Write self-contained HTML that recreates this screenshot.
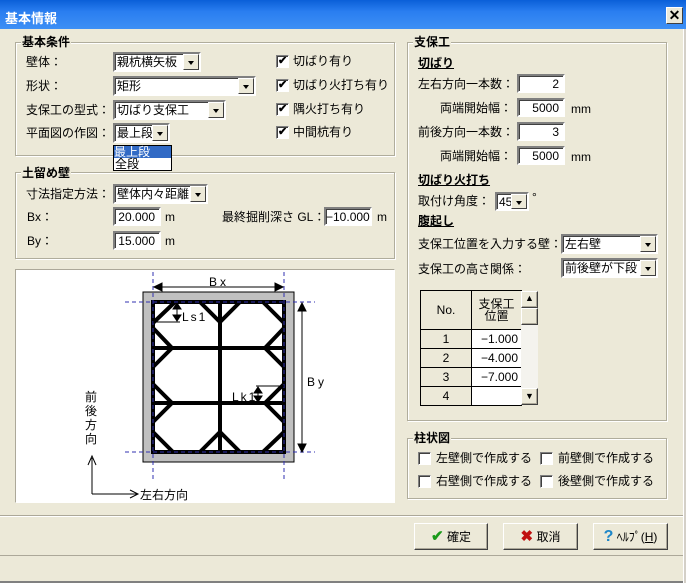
<!DOCTYPE html>
<html><head><meta charset="utf-8"><style>
*{box-sizing:border-box;margin:0;padding:0}
body{width:686px;height:583px;overflow:hidden;background:#ece9d8;font-family:"Liberation Sans","Noto Sans CJK JP",sans-serif;font-size:12px;color:#000;position:relative}
.a{position:absolute;white-space:nowrap;line-height:14px}
.title{position:absolute;left:0;top:0;width:686px;height:29px;background:linear-gradient(#0a5fd8,#2a7ef0 40%,#3d8ff5);color:#fff;font-weight:bold;font-size:13px;padding:8px 0 0 5px}
.close{position:absolute;left:666px;top:7px;width:17px;height:17px;background:#ece9d8;border:1px solid #fff;border-right-color:#404040;border-bottom-color:#404040;font-weight:bold;font-size:14px;line-height:14px;text-align:center;color:#000}
.grp{position:absolute;border:1px solid #b0ad9c;box-shadow:1px 1px 0 #fff inset,1px 1px 0 #fff}
.gt{position:absolute;background:#ece9d8;font-weight:bold;padding:0 1px;line-height:14px}
.in{position:absolute;background:#fff;border:2px solid;border-color:#808080 #fff #fff #808080;box-shadow:inset 1px 1px 0 #404040;text-align:right;padding-right:4px;line-height:16px}
.cb{position:absolute;background:#fff;border:2px solid;border-color:#808080 #fff #fff #808080;box-shadow:inset 1px 1px 0 #404040;padding-left:2px;line-height:16px;overflow:hidden}
.cb i{position:absolute;right:0;top:0;width:16px;bottom:0;background:#ece9d8;border:1px solid;border-color:#fff #404040 #404040 #fff}
.cb i:after{content:"";position:absolute;left:4px;top:6px;border:3px solid transparent;border-top:4px solid #000;border-bottom:0}
.ck{position:absolute;width:13px;height:13px;background:#fff;border:1px solid #808080;border-right-color:#fff;border-bottom-color:#fff;box-shadow:inset 1px 1px 0 #404040}
.ck.on:after{content:"✔";position:absolute;left:1px;top:-2px;font-size:11px;font-weight:bold}
.u{font-weight:bold;text-decoration:underline}
.btn{position:absolute;height:27px;background:#ece9d8;border:1px solid;border-color:#fff #404040 #404040 #fff;box-shadow:inset -1px -1px 0 #aca899;text-align:center;line-height:25px}
table{border-collapse:collapse;position:absolute}
td{border:1px solid #000;height:19px;font-size:12px}
</style></head><body>
<div class="title">基本情報</div><div class="close">✕</div>
<div style="position:absolute;left:683px;top:29px;width:3px;height:554px;background:#d4d0c8;border-left:1px solid #fff"></div>

<div class="grp" style="left:15px;top:42px;width:380px;height:114px"></div>
<div class="gt" style="left:21px;top:35px">基本条件</div>
<div class="a" style="left:26px;top:55px">壁体：</div>
<div class="a" style="left:26px;top:79px">形状：</div>
<div class="a" style="left:26px;top:103px">支保工の型式：</div>
<div class="a" style="left:26px;top:126px">平面図の作図：</div>
<div class="cb" style="left:113px;top:52px;width:88px;height:20px">親杭横矢板<i></i></div>
<div class="cb" style="left:113px;top:76px;width:143px;height:20px">矩形<i></i></div>
<div class="cb" style="left:113px;top:100px;width:113px;height:20px">切ばり支保工<i></i></div>
<div class="cb" style="left:113px;top:123px;width:57px;height:20px">最上段<i></i></div>
<div style="position:absolute;left:113px;top:145px;width:59px;height:26px;background:#fff;border:1px solid #000"></div>
<div class="a" style="left:114px;top:146px;width:57px;background:#316ac5;color:#fff;height:12px;line-height:12px">最上段</div>
<div class="a" style="left:115px;top:158px;line-height:12px">全段</div>
<div class="ck on" style="left:276px;top:55px"></div><div class="a" style="left:293px;top:54px">切ばり有り</div>
<div class="ck on" style="left:276px;top:79px"></div><div class="a" style="left:293px;top:78px">切ばり火打ち有り</div>
<div class="ck on" style="left:276px;top:103px"></div><div class="a" style="left:293px;top:102px">隅火打ち有り</div>
<div class="ck on" style="left:276px;top:126px"></div><div class="a" style="left:293px;top:125px">中間杭有り</div>

<div class="grp" style="left:15px;top:172px;width:380px;height:87px"></div>
<div class="gt" style="left:21px;top:166px">土留め壁</div>
<div class="a" style="left:26px;top:187px">寸法指定方法：</div>
<div class="cb" style="left:113px;top:184px;width:95px;height:20px">壁体内々距離<i></i></div>
<div class="a" style="left:27px;top:210px">Bx：</div>
<div class="in" style="left:113px;top:207px;width:48px;height:19px">20.000</div><div class="a" style="left:165px;top:210px">m</div>
<div class="a" style="left:27px;top:234px">By：</div>
<div class="in" style="left:113px;top:231px;width:48px;height:19px">15.000</div><div class="a" style="left:165px;top:234px">m</div>
<div class="a" style="left:222px;top:210px">最終掘削深さ GL：</div>
<div class="in" style="left:324px;top:207px;width:48px;height:19px">−10.000</div><div class="a" style="left:377px;top:210px">m</div>

<div style="position:absolute;left:15px;top:269px;width:380px;height:234px;background:#fff;border:1px solid #aca899;border-right-color:#fff;border-bottom-color:#fff"></div>
<svg style="position:absolute;left:0;top:0" width="686" height="583">
<rect x="143" y="292" width="151" height="170" fill="#c0c0c0" stroke="#000" stroke-width="1"/>
<rect x="153" y="302" width="131" height="150" fill="#fff" stroke="#000" stroke-width="4"/>
<g stroke="#000" stroke-width="4" fill="none">
<line x1="220" y1="302" x2="220" y2="452"/><line x1="153" y1="348" x2="284" y2="348"/><line x1="153" y1="403" x2="284" y2="403"/>
<polyline points="153,323 175,302"/><polyline points="200,302 220,322 240,302"/><polyline points="263,302 284,323"/>
<polyline points="153,328 172,348 153,367"/><polyline points="284,328 265,348 284,367"/>
<polyline points="153,384 172,403 153,422"/><polyline points="284,384 265,403 284,422"/>
<polyline points="153,432 173,452"/><polyline points="200,452 220,432 240,452"/><polyline points="263,452 284,432"/>
</g>
<g stroke="#3030b0" stroke-width="1" stroke-dasharray="4,3">
<line x1="153" y1="272" x2="153" y2="480"/><line x1="284" y1="272" x2="284" y2="480"/>
<line x1="125" y1="302" x2="315" y2="302"/><line x1="125" y1="452" x2="315" y2="452"/>
</g>
<g stroke="#000" stroke-width="1" fill="#000">
<line x1="157" y1="287" x2="280" y2="287"/><polygon points="154,287 162,283 162,291"/><polygon points="283,287 275,283 275,291"/>
<line x1="302" y1="306" x2="302" y2="449"/><polygon points="302,303 298,311 306,311"/><polygon points="302,452 298,444 306,444"/>
<line x1="153" y1="322" x2="180" y2="322"/><line x1="177" y1="305" x2="177" y2="320"/><polygon points="177,303 173,309 181,309"/><polygon points="177,321 173,315 181,315"/>
<line x1="256" y1="386" x2="284" y2="386"/><line x1="258" y1="388" x2="258" y2="401"/><polygon points="258,387 254,393 262,393"/><polygon points="258,402 254,396 262,396"/>
<line x1="92" y1="458" x2="92" y2="494" fill="none"/><line x1="92" y1="494" x2="137" y2="494"/>
</g>
<polyline points="88,465 92,456 96,465" stroke="#000" fill="none"/>
<polyline points="130,490 138,494 130,498" stroke="#000" fill="none"/>
</svg>
<div class="a" style="left:209px;top:275px;letter-spacing:3px">Bx</div>
<div class="a" style="left:307px;top:375px;letter-spacing:3px">By</div>
<div class="a" style="left:182px;top:310px;letter-spacing:2px">Ls1</div>
<div class="a" style="left:232px;top:390px;letter-spacing:2px">Lk1</div>
<div class="a" style="left:85px;top:390px;width:14px;white-space:normal;line-height:14px">前後方向</div>
<div class="a" style="left:140px;top:488px">左右方向</div>

<div class="grp" style="left:407px;top:42px;width:260px;height:379px"></div>
<div class="gt" style="left:413px;top:35px">支保工</div>
<div class="a u" style="left:418px;top:56px">切ばり</div>
<div class="a" style="left:418px;top:77px">左右方向一本数：</div>
<div class="in" style="left:517px;top:74px;width:48px;height:19px">2</div>
<div class="a" style="left:440px;top:101px">両端開始幅：</div>
<div class="in" style="left:517px;top:98px;width:48px;height:19px">5000</div><div class="a" style="left:571px;top:102px">mm</div>
<div class="a" style="left:418px;top:125px">前後方向一本数：</div>
<div class="in" style="left:517px;top:122px;width:48px;height:19px">3</div>
<div class="a" style="left:440px;top:149px">両端開始幅：</div>
<div class="in" style="left:517px;top:146px;width:48px;height:19px">5000</div><div class="a" style="left:571px;top:150px">mm</div>
<div class="a u" style="left:418px;top:173px">切ばり火打ち</div>
<div class="a" style="left:418px;top:194px">取付け角度：</div>
<div class="cb" style="left:495px;top:192px;width:34px;height:19px">45<i></i></div><div class="a" style="left:532px;top:190px">°</div>
<div class="a u" style="left:418px;top:214px">腹起し</div>
<div class="a" style="left:418px;top:237px">支保工位置を入力する壁：</div>
<div class="cb" style="left:561px;top:234px;width:97px;height:20px">左右壁<i></i></div>
<div class="a" style="left:418px;top:262px">支保工の高さ関係：</div>
<div class="cb" style="left:561px;top:258px;width:97px;height:20px">前後壁が下段<i></i></div>
<table style="left:420px;top:290px;background:#ece9d8">
<tr><td style="width:51px;height:39px;text-align:center">No.</td><td style="width:50px;text-align:center;line-height:12px">支保工<br>位置</td></tr>
<tr><td style="text-align:center">1</td><td style="background:#fff;text-align:right;padding-right:3px">−1.000</td></tr>
<tr><td style="text-align:center">2</td><td style="background:#fff;text-align:right;padding-right:3px">−4.000</td></tr>
<tr><td style="text-align:center">3</td><td style="background:#fff;text-align:right;padding-right:3px">−7.000</td></tr>
<tr><td style="text-align:center">4</td><td style="background:#fff"></td></tr>
</table>
<div style="position:absolute;left:521px;top:291px;width:17px;height:114px;background:#f4f3ee"></div>
<div class="btn" style="left:521px;top:291px;width:17px;height:17px;line-height:12px;font-size:9px">▲</div>
<div class="btn" style="left:521px;top:308px;width:17px;height:17px"></div>
<div class="btn" style="left:521px;top:388px;width:17px;height:17px;line-height:14px;font-size:9px">▼</div>

<div class="grp" style="left:407px;top:438px;width:260px;height:61px"></div>
<div class="gt" style="left:413px;top:431px">柱状図</div>
<div class="ck" style="left:418px;top:452px"></div><div class="a" style="left:436px;top:451px">左壁側で作成する</div>
<div class="ck" style="left:540px;top:452px"></div><div class="a" style="left:558px;top:451px">前壁側で作成する</div>
<div class="ck" style="left:418px;top:475px"></div><div class="a" style="left:436px;top:474px">右壁側で作成する</div>
<div class="ck" style="left:540px;top:475px"></div><div class="a" style="left:558px;top:474px">後壁側で作成する</div>

<div style="position:absolute;left:0;top:515px;width:683px;height:2px;border-top:1px solid #aca899;border-bottom:1px solid #fff"></div>
<div class="btn" style="left:414px;top:523px;width:74px"><span style="color:#1a9a1a;font-weight:bold;font-size:15px">✔</span> 確定</div>
<div class="btn" style="left:503px;top:523px;width:75px"><span style="color:#c01010;font-weight:bold;font-size:15px">✖</span> 取消</div>
<div class="btn" style="left:593px;top:523px;width:75px"><span style="color:#1c86c8;font-weight:bold;font-size:16px">?</span> ﾍﾙﾌﾟ(<u>H</u>)</div>
<div style="position:absolute;left:0;top:555px;width:683px;height:28px;border-top:1px solid #aca899;border-bottom:2px solid #808080"></div>
</body></html>
